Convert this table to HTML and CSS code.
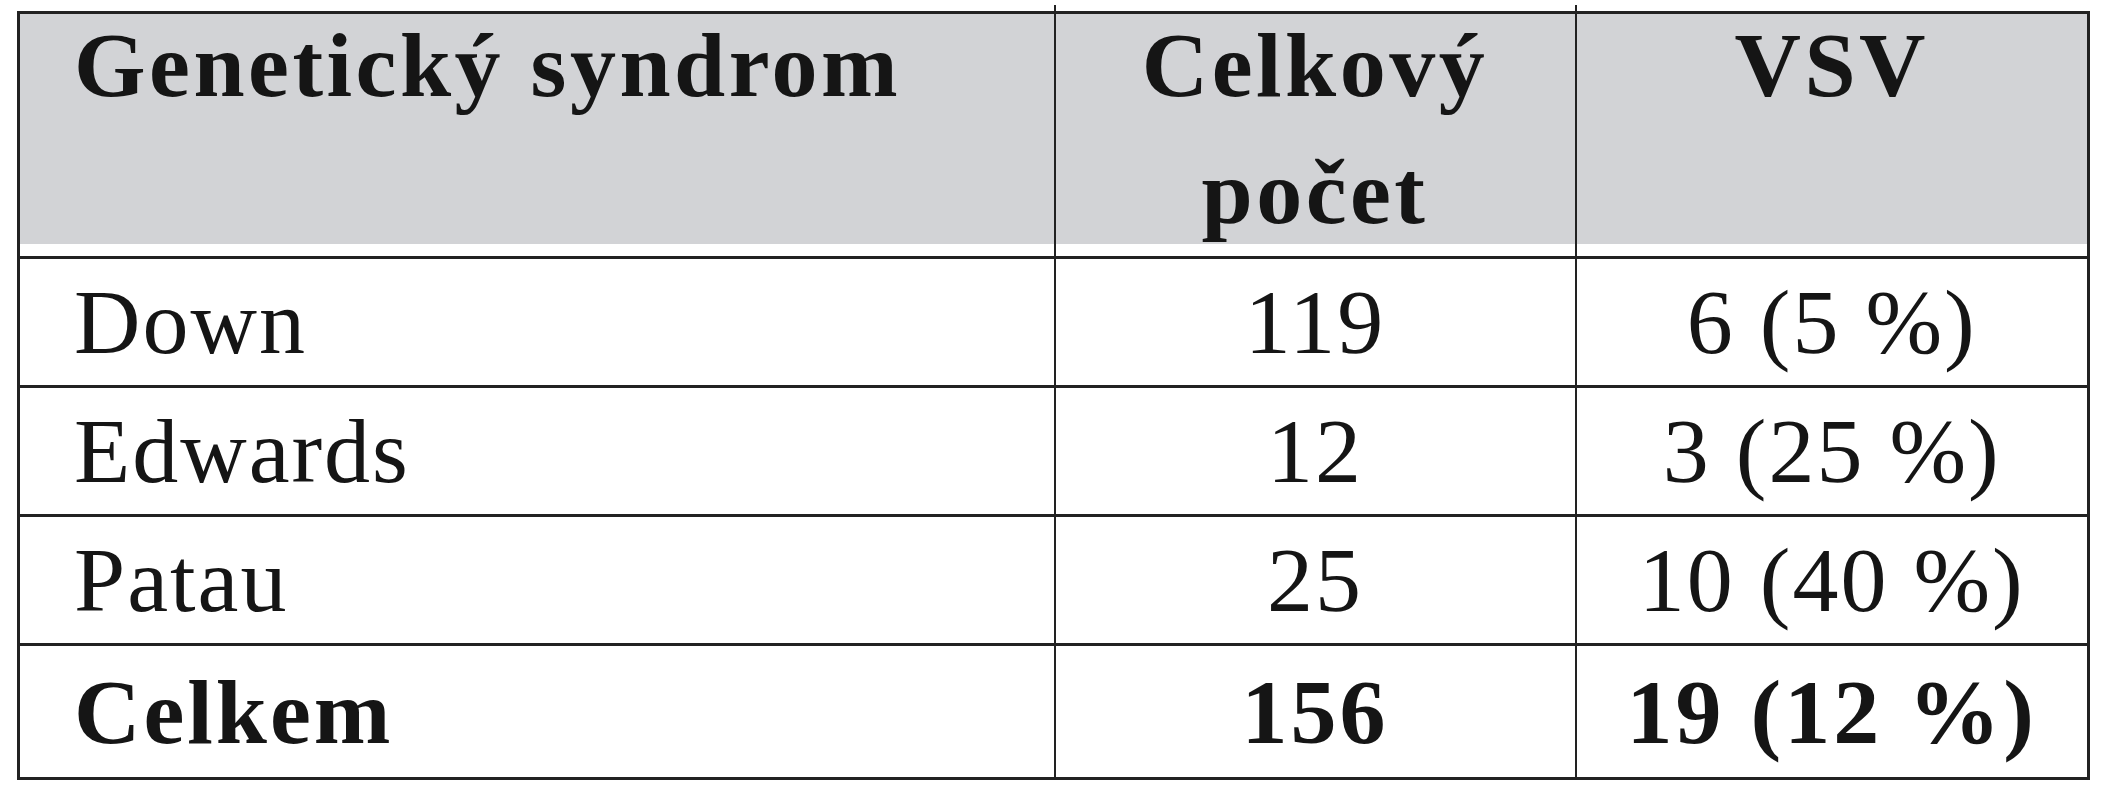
FILE: index.html
```html
<!DOCTYPE html>
<html lang="cs">
<head>
<meta charset="utf-8">
<title>Genetický syndrom</title>
<link rel="stylesheet" href="styles.css">
</head>
<body>
<table class="data">
  <colgroup>
    <col class="c1">
    <col class="c2">
    <col class="c3">
  </colgroup>
  <thead>
    <tr class="head">
      <th class="name"><span class="hd">Genetický syndrom</span></th>
      <th class="num tick"><span class="hd">Celkový<br>počet</span></th>
      <th class="num tick"><span class="hd">VSV</span></th>
    </tr>
  </thead>
  <tbody>
    <tr class="r">
      <td class="name">Down</td>
      <td class="num">119</td>
      <td class="num">6 (5 %)</td>
    </tr>
    <tr class="r">
      <td class="name">Edwards</td>
      <td class="num">12</td>
      <td class="num">3 (25 %)</td>
    </tr>
    <tr class="r">
      <td class="name">Patau</td>
      <td class="num">25</td>
      <td class="num">10 (40 %)</td>
    </tr>
    <tr class="r total">
      <td class="name">Celkem</td>
      <td class="num">156</td>
      <td class="num">19 (12 %)</td>
    </tr>
  </tbody>
</table>
</body>
</html>
```

FILE: styles.css
```css
html, body {
  margin: 0;
  padding: 0;
  background: #ffffff;
}

body {
  font-family: "Liberation Serif", "Times New Roman", serif;
  color: #151515;
}

.data {
  border-collapse: collapse;
  table-layout: fixed;
  margin: 11px 0 0 17px;
  width: 2072px;
  font-size: 92px;
}

.c1 { width: 1036px; }
.c2 { width: 521px; }
.c3 { width: 513px; }

.data th,
.data td {
  border-top: 3px solid #222222;
  border-bottom: 3px solid #222222;
  border-left: 2px solid #222222;
  border-right: 2px solid #222222;
  padding: 0;
}

.data th.name,
.data td.name {
  border-left-width: 3px;
}

.data th:last-child,
.data td:last-child {
  border-right-width: 3px;
}

.head th {
  height: 242px;
  vertical-align: top;
  font-weight: bold;
  letter-spacing: 3.5px;
  line-height: 127px;
  background: linear-gradient(#d2d3d6, #d2d3d6) top left / 100% calc(100% - 12px) no-repeat;
  position: relative;
}

.hd {
  display: block;
  margin-top: -12px;
}

.tick::before {
  content: "";
  position: absolute;
  left: -2px;
  top: -9px;
  width: 2px;
  height: 9px;
  background: #222222;
}

.name {
  text-align: left;
  padding-left: 54px !important;
}

.num {
  text-align: center;
}

.r td {
  height: 126px;
  line-height: 120px;
  vertical-align: middle;
  font-weight: normal;
  letter-spacing: 2px;
}

.total td {
  height: 131px;
  font-weight: bold;
  letter-spacing: 3px;
}
```
